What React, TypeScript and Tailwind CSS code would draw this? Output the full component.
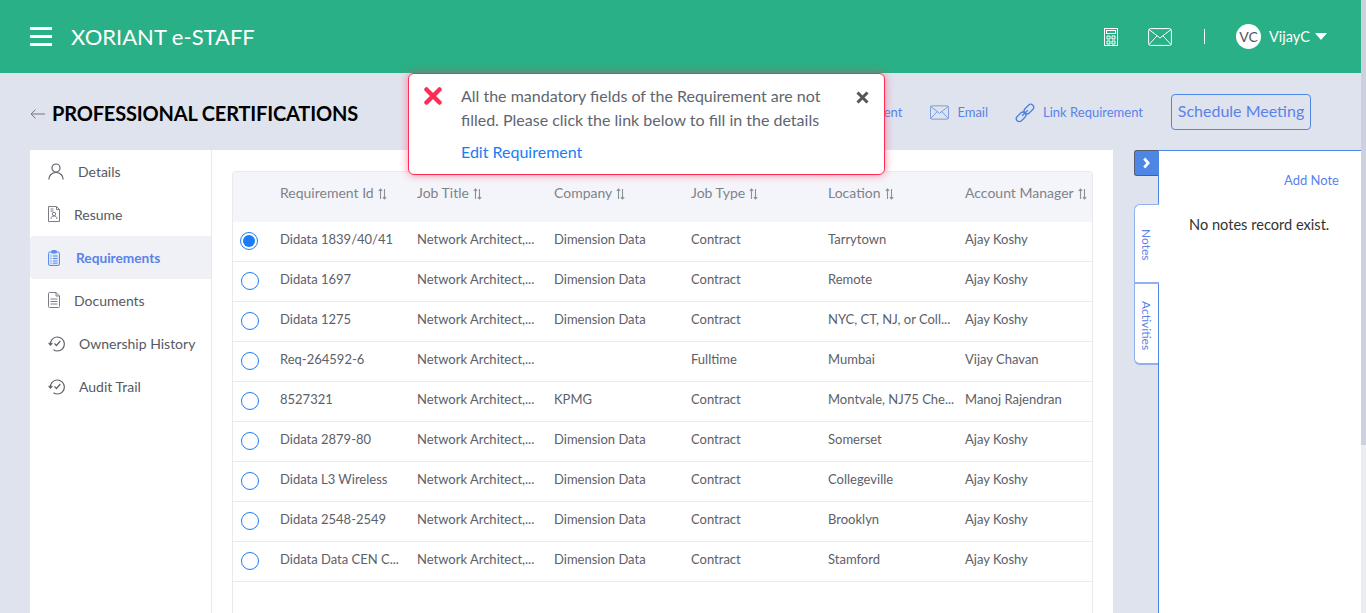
import { ReactNode } from 'react';

const rows = [
  ['Didata 1839/40/41', 'Network Architect,...', 'Dimension Data', 'Contract', 'Tarrytown', 'Ajay Koshy'],
  ['Didata 1697', 'Network Architect,...', 'Dimension Data', 'Contract', 'Remote', 'Ajay Koshy'],
  ['Didata 1275', 'Network Architect,...', 'Dimension Data', 'Contract', 'NYC, CT, NJ, or Coll...', 'Ajay Koshy'],
  ['Req-264592-6', 'Network Architect,...', '', 'Fulltime', 'Mumbai', 'Vijay Chavan'],
  ['8527321', 'Network Architect,...', 'KPMG', 'Contract', 'Montvale, NJ75 Che...', 'Manoj Rajendran'],
  ['Didata 2879-80', 'Network Architect,...', 'Dimension Data', 'Contract', 'Somerset', 'Ajay Koshy'],
  ['Didata L3 Wireless', 'Network Architect,...', 'Dimension Data', 'Contract', 'Collegeville', 'Ajay Koshy'],
  ['Didata 2548-2549', 'Network Architect,...', 'Dimension Data', 'Contract', 'Brooklyn', 'Ajay Koshy'],
  ['Didata Data CEN C...', 'Network Architect,...', 'Dimension Data', 'Contract', 'Stamford', 'Ajay Koshy'],
];

const columns = ['Requirement Id', 'Job Title', 'Company', 'Job Type', 'Location', 'Account Manager'];

function SortIcon() {
  return (
    <svg width="9" height="12" viewBox="0 0 9 12" fill="none" stroke="#8b8f96" strokeWidth="1.100" className="ml-1 inline-block align-[-2px]">
      <path d="M2.500 11V1M.8 2.800 2.500 1l1.700 1.800M6.500 1v10M4.800 9.200 6.500 11l1.700-1.800" />
    </svg>
  );
}

function MailIcon({ w, h, color }: { w: number; h: number; color: string }) {
  return (
    <svg width={w} height={h} viewBox="0 0 24 18" fill="none" stroke={color} strokeWidth="1">
      <rect x="0.600" y="0.600" width="22.800" height="16.800" rx="2" />
      <path d="M1 1.500 12 10 23 1.500M1 16.500l8-8.600M23 16.500l-8-8.600" />
    </svg>
  );
}

function HistoryIcon() {
  return (
    <svg width="18" height="17" viewBox="0 0 18 17" fill="none" stroke="#5f6369" strokeWidth="1.200">
      <path d="M2.400 9.500A7 7 0 1 1 9.500 16a7 7 0 0 1-4-1.300" />
      <path d="M.6 7.800 2.400 10l2-2M6.500 8.500l2 2 3.800-4.500" />
    </svg>
  );
}

const sideItems: { label: string; icon: ReactNode; gap: string; active?: boolean }[] = [
  {
    label: 'Details',
    gap: 'gap-[14px]',
    icon: (
      <svg width="16" height="17" viewBox="0 0 16 17" fill="none" stroke="#5f6369" strokeWidth="1.200">
        <circle cx="8" cy="5" r="4" />
        <path d="M.8 16.500c0-4 3-7 7.200-7s7.200 3 7.200 7" />
      </svg>
    ),
  },
  {
    label: 'Resume',
    gap: 'gap-[14px]',
    icon: (
      <svg width="12" height="16" viewBox="0 0 12 16" fill="none" stroke="#7a7e84" strokeWidth="1">
        <path d="M.5.500h8l3 3v12H.5zM8.500.5v3h3M2.500 3h3M2.500 5h3" />
        <circle cx="6" cy="8" r="1.700" />
        <path d="M3 13c0-2 1.300-3 3-3s3 1 3 3" />
      </svg>
    ),
  },
  {
    label: 'Requirements',
    gap: 'gap-[16px]',
    active: true,
    icon: (
      <svg width="12" height="16" viewBox="0 0 12 16" fill="#dbe6fa" stroke="#5b8dea" strokeWidth="1">
        <rect x="0.500" y="2" width="11" height="13.500" rx="1.500" />
        <rect x="3.500" y="0.500" width="5" height="2.500" rx="1" fill="#5b8dea" />
        <path d="M2.500 6h1M5 6h4.500M2.500 8.500h1M5 8.500h4.500M2.500 11h1M5 11h4.500M2.500 13.200h1M5 13.200h4.500" />
      </svg>
    ),
  },
  {
    label: 'Documents',
    gap: 'gap-[14px]',
    icon: (
      <svg width="12" height="16" viewBox="0 0 12 16" fill="none" stroke="#7a7e84" strokeWidth="1">
        <path d="M.5 1.500a1 1 0 0 1 1-1H8l3.500 3.500v10.500a1 1 0 0 1-1 1h-9a1 1 0 0 1-1-1zM8 .5V4h3.500M2.500 7h7M2.500 9.500h7M2.500 12h7" />
      </svg>
    ),
  },
  { label: 'Ownership History', gap: 'gap-[13px]', icon: <HistoryIcon /> },
  { label: 'Audit Trail', gap: 'gap-[13px]', icon: <HistoryIcon /> },
];

function Radio({ checked }: { checked: boolean }) {
  return (
    <span className="flex h-[18px] w-[18px] items-center justify-center rounded-full border border-[#1a7cf6] bg-white">
      {checked && <span className="h-3 w-3 rounded-full bg-[#1a7cf6]" />}
    </span>
  );
}

export default function App() {
  return (
    <div className="relative h-[613px] w-[1366px] overflow-hidden bg-[#dfe3ee] font-['Lato',sans-serif]">
      <header className="flex h-[73px] items-center bg-[#2ab086] pl-[30px] pr-[39px] text-white">
        <div className="flex w-[22px] flex-col gap-[5px]">
          <span className="h-[3px] bg-white" />
          <span className="h-[3px] bg-white" />
          <span className="h-[3px] bg-white" />
        </div>
        <span className="ml-[19px] text-[22px] leading-none">XORIANT e-STAFF</span>
        <div className="ml-auto flex items-center">
          <svg width="14" height="18" viewBox="0 0 14 18" fill="none" stroke="#fff" strokeWidth="1">
            <rect x="0.500" y="0.500" width="13" height="17" />
            <rect x="2.500" y="2.500" width="9" height="3" />
            <path d="M3 8h3v3H3zM8 8h3v3H8zM3 13h3v3H3zM8 13h3v3H8z" />
          </svg>
          <span className="ml-[30px]">
            <MailIcon w={24} h={18} color="#fff" />
          </span>
          <span className="ml-[32px] h-[15px] w-px bg-white" />
          <span className="ml-[31px] flex h-[25px] w-[25px] items-center justify-center rounded-full bg-white text-[14px] text-[#555]">
            VC
          </span>
          <span className="ml-2 text-[14.500px]">VijayC</span>
          <span className="ml-[5px] h-0 w-0 border-x-[6.500px] border-t-[7px] border-x-transparent border-t-white" />
        </div>
      </header>

      <div className="flex h-[77px] items-center pl-[30px] pr-[55px]">
        <svg width="15" height="10" viewBox="0 0 15 10" fill="none" stroke="#777" strokeWidth="1" className="mt-[5px]">
          <path d="M15 5H1M5.500.7 1 5l4.500 4.300" />
        </svg>
        <h1 className="ml-[7px] mt-[2px] text-[20px] font-bold leading-none tracking-[-0.17px] text-black">PROFESSIONAL CERTIFICATIONS</h1>
        <div className="ml-auto flex items-center text-[13px] text-[#5a82e8]">
          <span className="mt-[2px]">Comment</span>
          <span className="ml-[28px] mt-[2px]">
            <MailIcon w={19} h={15} color="#5a8be0" />
          </span>
          <span className="ml-2 mt-[2px]">Email</span>
          <svg width="20" height="20" viewBox="0 0 20 20" fill="none" stroke="#4c80de" strokeWidth="1.300" className="ml-[27px] mt-[2px]">
            <g transform="rotate(-45 10 10)">
              <rect x="-1" y="7" width="11" height="6" rx="3" />
              <rect x="10" y="7" width="11" height="6" rx="3" />
              <path d="M6 10h8" />
            </g>
          </svg>
          <span className="ml-2 mt-[2px]">Link Requirement</span>
          <button className="ml-[28px] h-9 w-[140px] rounded-[4px] border border-[#4d86e4] pb-px text-[16px] text-[#5a82e8]">
            Schedule Meeting
          </button>
        </div>
      </div>

      <div className="flex pl-[30px]">
        <div className="flex h-[463px] w-[1083px] bg-white">
          <nav className="w-[182px] shrink-0 border-r border-[#e6e8ef]">
            {sideItems.map((item) => (
              <div
                key={item.label}
                className={`flex h-[43px] items-center pl-[18px] ${item.gap} ${
                  item.active
                    ? 'rounded-l-[4px] bg-[#eff1f7] pt-px text-[13.700px] font-bold text-[#5a82e8]'
                    : 'pb-px text-[14px] text-[#555a62]'
                }`}
              >
                {item.icon}
                {item.label}
              </div>
            ))}
          </nav>
          <div className="px-5 pt-[21px]">
            <div className="h-[442px] w-[861px] rounded-t-[4px] border border-b-0 border-[#e8eaf0]">
              <div className="grid h-[50px] grid-cols-[47px_repeat(6,137px)] items-center rounded-t-[4px] bg-[#f4f5fa] pb-[10px] text-[14px] text-[#7f8389]">
                <span />
                {columns.map((c) => (
                  <span key={c} className="whitespace-nowrap">
                    {c}
                    <SortIcon />
                  </span>
                ))}
              </div>
              {rows.map((row, i) => (
                <div
                  key={row[0]}
                  className="grid h-10 grid-cols-[47px_repeat(6,137px)] items-center border-b border-[#e8eaf0] pb-[3px] text-[13px] text-[#5c6068]"
                >
                  <span className={`mt-px flex justify-center ${i === 0 ? 'pr-[15px]' : 'pr-[13px]'}`}>
                    <Radio checked={i === 0} />
                  </span>
                  {row.map((cell, j) => (
                    <span key={j} className="whitespace-nowrap">
                      {cell}
                    </span>
                  ))}
                </div>
              ))}
            </div>
          </div>
        </div>

        <aside className="ml-[21px] flex w-[24px] shrink-0 flex-col items-stretch">
          <div className="flex h-[26px] items-center justify-center rounded-l-[3px] border border-r-0 border-[#555e70] bg-[#4d86e4]">
            <svg width="9" height="12" viewBox="0 0 8 10" fill="none" stroke="#fff" strokeWidth="2.400">
              <path d="M2 1l3.500 4L2 9" />
            </svg>
          </div>
          <div className="relative z-10 mt-[28px] flex h-[80px] w-[25px] items-center justify-start rounded-tl-[6px] border border-b-2 border-r-0 border-[#8fb2ee] bg-white pr-[2px] pt-6 text-[12px] text-[#5a82e8] [writing-mode:vertical-rl]">
            Notes
          </div>
          <div className="flex h-[81px] items-center justify-start rounded-bl-[6px] border border-b-2 border-r-0 border-t-0 border-[#8fb2ee] bg-white pr-[2px] pt-[17px] text-[12px] text-[#5a82e8] [writing-mode:vertical-rl]">
            Activities
          </div>
        </aside>
        <aside className="h-[463px] flex-1 border-l border-t border-[#4d86e4] bg-white">
          <p className="mt-[20px] pr-[27px] text-right text-[13px] text-[#5a82e8]">Add Note</p>
          <p className="ml-[30px] mt-[23px] text-[14.600px] text-[#333]">No notes record exist.</p>
        </aside>
      </div>

      <div className="absolute right-0 top-0 flex h-[613px] w-[5px] flex-col bg-[#ecedf4]">
        <div className="h-[445px] bg-[#cdd0de]" />
      </div>

      <div className="absolute left-[408px] top-[73px] h-[102px] w-[477px] rounded-[6px] border border-[#ff2d55] bg-white shadow-[0_0_8px_rgba(255,45,85,0.55)]">
        <div className="flex pl-[15px] pt-[13px]">
          <svg width="18" height="18" viewBox="0 0 18 18" stroke="#ff2d55" strokeWidth="4.500" strokeLinecap="round" className="shrink-0">
            <path d="M2.500 2.500l13 13M15.500 2.500l-13 13" />
          </svg>
          <div className="ml-[19px] text-[16px] leading-[24px] text-[#5f6570]">
            <p className="-mt-[3px] w-[375px]">All the mandatory fields of the Requirement are not filled. Please click the link below to fill in the details</p>
            <p className="mt-2 text-[#1a7cf6]">Edit Requirement</p>
          </div>
          <svg width="13" height="13" viewBox="0 0 13 13" stroke="#555" strokeWidth="3" className="ml-[20px] mt-[4px] shrink-0">
            <path d="M1.500 1.500l10 10M11.500 1.500l-10 10" />
          </svg>
        </div>
      </div>
    </div>
  );
}
